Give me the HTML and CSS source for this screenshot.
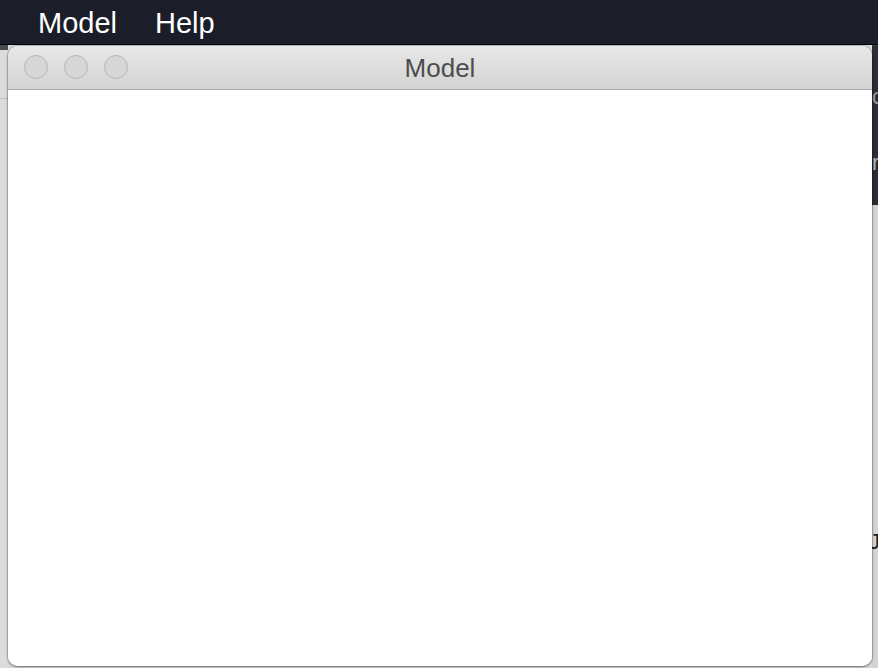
FILE: index.html
```html
<!DOCTYPE html>
<html>
<head>
<meta charset="utf-8">
<link rel="stylesheet" href="styles.css">
</head>
<body>
<header class="menubar">
  <span class="menu-item">Model</span>
  <span class="menu-item">Help</span>
</header>
<main class="desktop">
  <div class="bg-left"><div class="bg-left-top"></div><div class="bg-left-line"></div></div>
  <div class="bg-right">
    <div class="bg-right-dark">
      <span class="peek peek-c">c</span>
      <span class="peek peek-r">r</span>
    </div>
    <div class="bg-right-light"><span class="peek peek-j">J</span></div>
  </div>
  <section class="window">
    <div class="titlebar">
      <div class="lights">
        <span class="light"></span>
        <span class="light"></span>
        <span class="light"></span>
      </div>
      <div class="title">Model</div>
    </div>
    <div class="content"></div>
  </section>
</main>
</body>
</html>
```

FILE: styles.css
```css
html, body {
  margin: 0;
  padding: 0;
  width: 878px;
  height: 668px;
  overflow: hidden;
  font-family: "Liberation Sans", Arial, sans-serif;
}
body {
  background: #dadada;
}
.menubar {
  height: 44px;
  background: #1b1e28;
  border-bottom: 1px solid #050608;
  display: flex;
  align-items: center;
  gap: 38px;
  padding-left: 38px;
  box-sizing: content-box;
}
.menu-item {
  color: #ffffff;
  font-size: 29px;
  line-height: 44px;
  padding-top: 1px;
}
.desktop {
  position: relative;
  height: 623px;
}
.bg-left {
  position: absolute;
  left: 0;
  top: 0;
  width: 8px;
  height: 100%;
  background: #dcdcdc;
}
.bg-left-top {
  height: 5px;
  background: #4a4b4e;
}
.bg-left-line {
  margin-top: 48px;
  height: 1px;
  background: #c2c2c2;
}
.bg-right {
  position: absolute;
  right: 0;
  top: 0;
  width: 6px;
  height: 100%;
  overflow: hidden;
  display: flex;
  flex-direction: column;
}
.bg-right-dark {
  height: 159px;
  background: #2b2e34;
  position: relative;
  border-top: 1px solid #444;
}
.bg-right-light {
  flex: 1;
  background: #d4d4d4;
  position: relative;
}
.peek {
  position: absolute;
  left: 0;
  font-size: 22px;
  line-height: 1;
}
.peek-c { top: 40px; color: #9a9ca0; }
.peek-r { top: 106px; color: #b0b2b6; }
.peek-j { top: 326px; left: -3px; color: #222; }
.window {
  position: absolute;
  left: 8px;
  top: 1px;
  width: 864px;
  height: 620px;
  border-radius: 10px;
  background: #ffffff;
  overflow: hidden;
  box-shadow: 0 1px 3px rgba(0,0,0,0.45), 0 0 0 1px rgba(0,0,0,0.12);
  display: flex;
  flex-direction: column;
}
.titlebar {
  height: 43px;
  background: linear-gradient(#e8e8e8, #d3d3d3);
  border-bottom: 1px solid #ababab;
  position: relative;
  display: flex;
  align-items: center;
  justify-content: center;
  flex-shrink: 0;
}
.lights {
  position: absolute;
  left: 16px;
  top: 9px;
  display: flex;
  gap: 16px;
}
.light {
  width: 22px;
  height: 22px;
  border-radius: 50%;
  background: #d6d6d6;
  border: 1px solid #b4b4b4;
}
.title {
  font-size: 26px;
  color: #4d4d4d;
  padding-top: 1px;
}
.content {
  flex: 1;
  background: #ffffff;
}
```
